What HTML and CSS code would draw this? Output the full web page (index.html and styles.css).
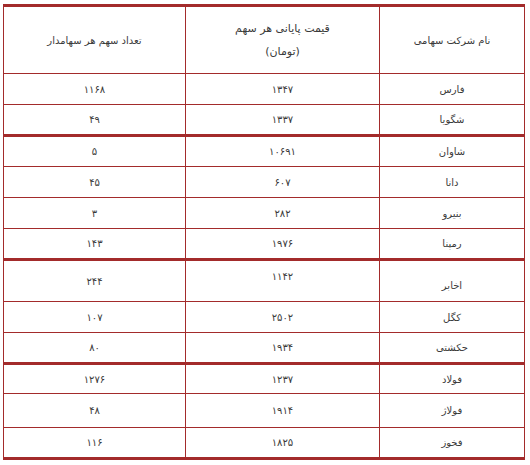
FILE: index.html
```html
<!DOCTYPE html>
<html lang="fa" dir="rtl">
<head>
<meta charset="utf-8">
<title>جدول سهام</title>
<link rel="stylesheet" href="styles.css">
</head>
<body>
<div class="wrap">
<table class="stocks">
  <colgroup>
    <col class="c-name">
    <col class="c-price">
    <col class="c-count">
  </colgroup>
  <thead>
    <tr class="head">
      <th>نام شرکت سهامی</th>
      <th class="two"><span class="l1">قیمت پایانی هر سهم</span><span class="l2">(تومان)</span></th>
      <th>تعداد سهم هر سهامدار</th>
    </tr>
  </thead>
  <tbody>
    <tr><td>فارس</td><td>۱۳۴۷</td><td>۱۱۶۸</td></tr>
    <tr class="end"><td>شگویا</td><td>۱۳۳۷</td><td>۴۹</td></tr>
    <tr><td>شاوان</td><td>۱۰۶۹۱</td><td>۵</td></tr>
    <tr><td>دانا</td><td>۶۰۷</td><td>۴۵</td></tr>
    <tr><td>بنیرو</td><td>۲۸۲</td><td>۳</td></tr>
    <tr class="end"><td>رمپنا</td><td>۱۹۷۶</td><td>۱۴۳</td></tr>
    <tr class="tall"><td class="low">اخابر</td><td class="high">۱۱۴۲</td><td>۲۴۴</td></tr>
    <tr><td>کگل</td><td>۲۵۰۲</td><td>۱۰۷</td></tr>
    <tr class="end"><td>حکشتی</td><td>۱۹۳۴</td><td>۸۰</td></tr>
    <tr class="short"><td>فولاد</td><td>۱۲۳۷</td><td>۱۲۷۶</td></tr>
    <tr class="wide"><td>فولاژ</td><td>۱۹۱۴</td><td>۴۸</td></tr>
    <tr class="end"><td>فخوز</td><td>۱۸۲۵</td><td>۱۱۶</td></tr>
  </tbody>
</table>
</div>
</body>
</html>
```
FILE: styles.css
```css
html, body {
  margin: 0;
  padding: 0;
  background: #ffffff;
}

.wrap {
  padding: 4px 5px 0 4px;
}

.stocks {
  width: 521px;
  border-collapse: collapse;
  font-family: "DejaVu Sans", sans-serif;
  font-size: 10px;
  color: #3a3a3a;
  table-layout: fixed;
}

.c-name { width: 145px; }
.c-price { width: 194px; }
.c-count { width: 182px; }

.stocks th,
.stocks td {
  border: 1px solid #a32b2b;
  text-align: center;
  vertical-align: middle;
  padding: 0;
  font-weight: normal;
}

.stocks thead th {
  border-top: 3px solid #a32b2b;
}

.head {
  height: 68px;
}

.two .l1,
.two .l2 {
  display: block;
  font-size: 11px;
}

.two .l1 {
  margin-bottom: 10px;
}

.stocks tbody tr {
  height: 31px;
}

.stocks tr.end td {
  border-bottom: 3px solid #a32b2b;
}

.stocks tr.tall {
  height: 42px;
}

.stocks tr.short {
  height: 30px;
}

.stocks tr.wide {
  height: 34px;
}

.stocks td.high {
  padding-bottom: 10px;
}

.stocks td.low {
  padding-top: 8px;
}
```
